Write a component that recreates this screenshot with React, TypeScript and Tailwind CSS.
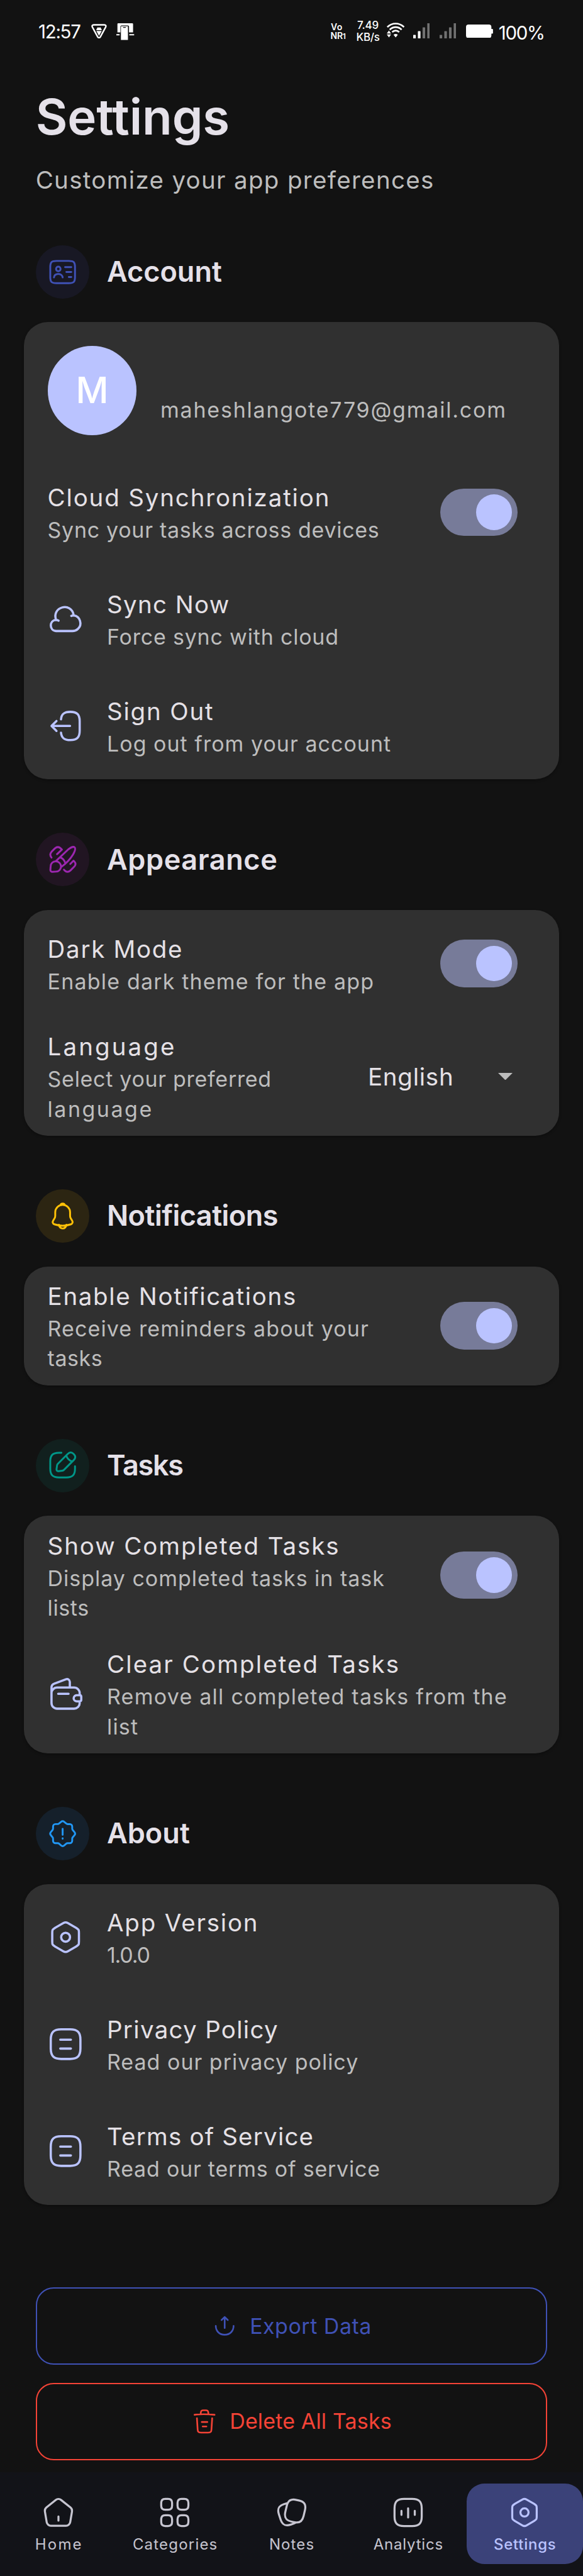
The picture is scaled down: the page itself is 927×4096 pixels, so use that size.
import type { ReactNode } from "react";

const ICONS: Record<string, string> = {
  card: "M17 21H7c-4 0-5-1-5-5V8c0-4 1-5 5-5h10c4 0 5 1 5 5v8c0 4-1 5-5 5Z M14 8h5 M15 12h4 M17 16h2 M8.5 11.29a1.81 1.81 0 1 0 0-3.62 1.81 1.81 0 0 0 0 3.62Z M12 16.33c-.14-1.46-1.3-2.6-2.76-2.74a7.6 7.6 0 0 0-1.49 0A3.08 3.08 0 0 0 5 16.33",
  brush:
    "M6.6 13.3 16.6 3.8C19 1.9 21 1.6 21.7 2.2C22.5 3 22 5.2 20.4 8C18 12 14.5 15.4 11 18 M9.7 10.3c2 .5 3.6 2 4.3 4.4 M6.4 13.5c2.4 0 4.3 1.9 4.3 4.2c0 2.3-1.7 4-4 4.1l-2.9.2c-1 .1-1.8-.6-1.7-1.7l.2-2.8c.1-2.3 1.8-4 4.1-4Z M3 10.5C1.7 8.8 1.7 7.2 3 5.8l2.8-2.8c1.5-1.3 3.2-1.3 4.6 0l1 1L7.5 7.7 M18.2 15.6l2.6-2.6l.8.8c1.1 1.3 1 2.7-.1 3.9l-3.2 3.2c-1.6 1.4-3.3 1.3-4.7 0l-.5-.6",
  bell: "M12.02 2.91c-3.31 0-6 2.69-6 6v2.89c0 .61-.26 1.54-.57 2.06L4.3 15.77c-.71 1.18-.22 2.49 1.08 2.93 4.31 1.44 8.96 1.44 13.27 0 1.21-.4 1.74-1.83 1.08-2.93l-1.15-1.91c-.3-.52-.56-1.45-.56-2.06V8.91c0-3.3-2.7-6-6-6Z M13.87 3.2c-.31-.09-.63-.16-.96-.2-.96-.12-1.88-.05-2.74.2.29-.74 1.01-1.26 1.85-1.26s1.56.52 1.85 1.26Z M15.02 19.06c0 1.65-1.35 3-3 3-.82 0-1.58-.34-2.12-.88-.54-.54-.88-1.3-.88-2.12",
  edit: "M11 2H9C4 2 2 4 2 9v6c0 5 2 7 7 7h6c5 0 7-2 7-7v-2 M16.04 3.02 8.16 10.9c-.3.3-.6.89-.66 1.32l-.43 3.01c-.16 1.09.61 1.85 1.7 1.7l3.01-.43c.42-.06 1.01-.36 1.32-.66l7.88-7.88c1.36-1.36 2-2.94 0-4.94-2-2-3.58-1.36-4.94 0Z M14.91 4.15a7.144 7.144 0 0 0 4.94 4.94",
  badge:
    "M10.75 2.45c.69-.59 1.82-.59 2.52 0l1.58 1.36c.3.26.86.47 1.26.47h1.7c1.06 0 1.93.87 1.93 1.93v1.7c0 .39.21.96.47 1.26l1.36 1.58c.59.69.59 1.82 0 2.52l-1.36 1.58c-.26.3-.47.86-.47 1.26v1.7c0 1.06-.87 1.93-1.93 1.93h-1.7c-.39 0-.96.21-1.26.47l-1.58 1.36c-.69.59-1.82.59-2.52 0l-1.58-1.36c-.3-.26-.86-.47-1.26-.47H6.18c-1.06 0-1.93-.87-1.93-1.93V16.1c0-.39-.21-.95-.46-1.25l-1.35-1.59c-.58-.69-.58-1.81 0-2.5l1.35-1.59c.25-.3.46-.86.46-1.25V6.2c0-1.06.87-1.93 1.93-1.93h1.73c.39 0 .96-.21 1.26-.47l1.58-1.35Z M12 8.13v4.83 M12 15.8v.3",
  cloud:
    "M5.54 12.62c-4.68.33-4.68 7.14 0 7.47h11.08c1.34.01 2.64-.49 3.64-1.4C23.55 15.82 21.8 10.05 17.47 9.5C15.92.12 2.38 3.69 5.59 12.62 M7.27 13.1c-.54-.27-1.13-.46-1.73-.48 M15.82 9.89c.52-.26 1.08-.39 1.66-.39",
  logout:
    "M8.9 7.56c.31-3.6 2.16-5.07 6.21-5.07h.13c4.47 0 6.26 1.79 6.26 6.26v6.52c0 4.47-1.79 6.26-6.26 6.26h-.13c-4.02 0-5.87-1.45-6.2-4.99 M15 12H3.62 M5.85 8.65 2.5 12l3.35 3.35",
  wallet:
    "M18.04 13.55c-.42.41-.66 1-.6 1.63.09 1.08 1.08 1.87 2.16 1.87h1.9v1.19c0 2.07-1.69 3.76-3.76 3.76H6.26c-2.07 0-3.76-1.69-3.76-3.76v-6.73c0-2.07 1.69-3.76 3.76-3.76h11.48c2.07 0 3.76 1.69 3.76 3.76v1.44h-2.02c-.56 0-1.07.22-1.44.6Z M2.5 12.41V7.84c0-1.19.73-2.25 1.84-2.67l7.94-3a1.9 1.9 0 0 1 2.57 1.78v3.8 M22.56 13.97v2.06c0 .55-.44 1-1 1.02H19.6c-1.08 0-2.07-.79-2.16-1.87-.06-.63.18-1.22.6-1.63.37-.38.88-.6 1.44-.6h2.08c.56.02 1 .47 1 1.02Z M7 12h7",
  setting:
    "M3 9.11v5.77C3 17 3 17 5 18.35l5.5 3.18c.83.48 2.18.48 3 0l5.5-3.18c2-1.35 2-1.35 2-3.46V9.11C21 7 21 7 19 5.65l-5.5-3.18c-.82-.48-2.17-.48-3 0L5 5.65C3 7 3 7 3 9.11Z M12 15a3 3 0 1 0 0-6 3 3 0 0 0 0 6Z",
  doc: "M9 22h6c5 0 7-2 7-7V9c0-5-2-7-7-7H9C4 2 2 4 2 9v6c0 5 2 7 7 7Z M8.4 9h7.2 M8.4 15h7.2",
  export: "M4 12c0 4.42 3 8 8 8s8-3.58 8-8 M12 14V4.2 M9.2 6.8 12 4l2.8 2.8",
  trash:
    "M21 5.98c-3.33-.33-6.68-.5-10.02-.5-1.98 0-3.96.1-5.94.3L3 5.98 M8.5 4.97l.22-1.31C8.88 2.71 9 2 10.69 2h2.62c1.69 0 1.82.75 1.97 1.67l.22 1.3 M18.85 9.14l-.65 10.07C18.09 20.78 18 22 15.21 22H8.79C6 22 5.91 20.78 5.8 19.21L5.15 9.14 M10.33 16.5h3.33 M9.5 12.5h5",
  home: "M10.07 2.82 3.14 8.37c-.78.62-1.28 1.93-1.11 2.91l1.33 7.96c.24 1.42 1.6 2.57 3.04 2.57h11.2c1.43 0 2.8-1.16 3.04-2.57l1.33-7.96c.16-.98-.34-2.29-1.11-2.91l-6.93-5.54c-1.07-.86-2.8-.86-3.86-.01Z M12 18v-3",
  category:
    "M5 10h2c2 0 3-1 3-3V5c0-2-1-3-3-3H5C3 2 2 3 2 5v2c0 2 1 3 3 3Z M17 10h2c2 0 3-1 3-3V5c0-2-1-3-3-3h-2c-2 0-3 1-3 3v2c0 2 1 3 3 3Z M17 22h2c2 0 3-1 3-3v-2c0-2-1-3-3-3h-2c-2 0-3 1-3 3v2c0 2 1 3 3 3Z M5 22h2c2 0 3-1 3-3v-2c0-2-1-3-3-3H5c-2 0-3 1-3 3v2c0 2 1 3 3 3Z",
  notes:
    "M21.66 10.44l-.98 4.18c-.84 3.61-2.5 5.07-5.62 4.77-.5-.04-1.04-.13-1.62-.27l-1.68-.4c-4.17-.99-5.46-3.05-4.48-7.23l.98-4.19c.2-.85.44-1.59.74-2.2 1.17-2.42 3.16-3.07 6.5-2.28l1.67.39c4.19.98 5.47 3.05 4.49 7.23Z M15.06 19.39c-.62.42-1.4.77-2.35 1.08l-1.58.52c-3.97 1.28-6.06.21-7.35-3.76L2.5 13.28c-1.28-3.97-.22-6.07 3.75-7.35l1.58-.52c.41-.13.8-.24 1.17-.31",
  analytics:
    "M9 22h6c5 0 7-2 7-7V9c0-5-2-7-7-7H9C4 2 2 4 2 9v6c0 5 2 7 7 7Z M7.1 10.8v3 M12 9v6.7 M16.9 10.8v3",
};

function Icon({ name, className }: { name: string; className: string }) {
  return (
    <svg
      viewBox="0 0 24 24"
      fill="none"
      stroke="currentColor"
      strokeWidth="1.5"
      strokeLinecap="round"
      strokeLinejoin="round"
      className={`shrink-0 ${className}`}
    >
      <path d={ICONS[name]} />
    </svg>
  );
}

function Signal({ lit }: { lit: number }) {
  return (
    <svg viewBox="0 0 31 28" className="h-[24px] w-[26.6px]">
      {[0, 1, 2, 3].map((i) => (
        <rect
          key={i}
          x={i * 8.7}
          y={[21.5, 14.5, 7.5, 0][i]}
          width="4.8"
          height={[6.5, 13.5, 20.5, 28][i]}
          rx="0.6"
          fill={i < lit ? "#fff" : "#717171"}
        />
      ))}
    </svg>
  );
}

function StatusBar() {
  return (
    <div className="flex h-[100px] items-start pt-[32px] text-white">
      <div className="ml-[61px] mt-[1.5px] w-[84px] text-[29.5px] leading-[32px] tracking-[-1.3px]">12:57</div>
      <svg viewBox="0 0 29 27" className="mt-[6px] h-[23.2px] w-[24.9px]">
        <path
          d="M4.6 1.7H24.4C27 1.7 28 3.8 26.8 6L17 24C15.8 26 13.2 26 12 24L2.2 6C1 3.8 2 1.7 4.6 1.7Z"
          fill="none"
          stroke="#fff"
          strokeWidth="2.8"
        />
        <path
          d="M9.5 11.6C9.5 9.5 10.6 8 11.9 7.3L11 5.7L12.6 6.6H16.4L18 5.7L17.1 7.3C18.4 8 19.5 9.5 19.5 11.6ZM9.5 13H19.5L14.5 22Z"
          fill="#fff"
        />
      </svg>
      <svg viewBox="0 0 33 31" className="ml-[15.4px] mt-[5px] h-[26.6px] w-[28.3px]">
        <path d="M2 17V1.500Q2 0 3.500 0H29.500Q31 0 31 1.500V17H23.500V6Q23.500 4 21.500 4H9.500Q7.500 4 7.500 6V17Z" fill="#fff" />
        <path d="M0 20H6V22.500H0ZM24 20H33V22.500H24Z" fill="#fff" />
        <path d="M8.500 5.500H21.500V31H8.500ZM12.500 7V8.500H17.500V7Z" fill="#fff" fillRule="evenodd" />
      </svg>
      <div className="ml-[312px] mt-[4px] w-[41px] text-[14px] font-semibold leading-[14px]">
        <div className="pl-[0.5px] tracking-[0.3px]">Vo</div>
        <div className="whitespace-nowrap tracking-[-0.3px]">
          NR<span className="text-[12px]">1</span>
        </div>
      </div>
      <div className="-mt-[1px] w-[48px] text-[17px] font-medium leading-[18.5px]">
        <div className="pl-[1.5px] tracking-[-0.14px]">7.49</div>
        <div className="tracking-[-0.36px]">KB/s</div>
      </div>
      <svg viewBox="0 0 33 28" className="mt-[4px] h-[24px] w-[28.3px]">
        <g fill="none" stroke="#fff" strokeWidth="3.2">
          <path d="M1 8.200C10-.4 23-.4 32 8.200" />
          <path d="M5.500 13C12 6.800 21 6.800 27.500 13" />
          <path d="M10 17.600C14 13.800 19 13.800 23 17.600" />
        </g>
        <path d="M4 14.500L8 20H0ZM0 22H8L4 27.500ZM16.500 27.500L12.500 22.500Q16.500 19.500 20.500 22.500Z" fill="#fff" />
      </svg>
      <div className="ml-[14px] mt-[5px] flex gap-[15.4px]">
        <Signal lit={2} />
        <Signal lit={0} />
      </div>
      <svg viewBox="0 0 50 25" className="ml-[15.4px] mt-[6.5px] h-[21.5px] w-[42.9px]">
        <rect width="47" height="25" rx="4.5" fill="#fff" />
        <rect x="45" y="8" width="5" height="9" rx="1.5" fill="#fff" />
      </svg>
      <div className="ml-[9px] mt-[4px] text-[29.5px] leading-[32px] tracking-[-1.3px]">100%</div>
    </div>
  );
}

function SectionHeader({
  icon,
  title,
  circle,
  color,
  tracking,
}: {
  icon: string;
  title: string;
  circle: string;
  color: string;
  tracking: string;
}) {
  return (
    <div className="flex h-[85px] items-center pl-[56.65px]">
      <div className={`flex size-[85px] shrink-0 items-center justify-center rounded-full ${circle}`}>
        <Icon name={icon} className={`size-[47.2px] ${color}`} />
      </div>
      <h2 className={`ml-[28.3px] text-[45px] font-semibold leading-[56px] text-[#e5e1e9] ${tracking}`}>{title}</h2>
    </div>
  );
}

function Card({ children }: { children: ReactNode }) {
  return (
    <div className="mx-[37.8px] mb-[85px] mt-[37.8px] rounded-[37.8px] bg-[#303030] pl-[37.8px] shadow-[0_2px_4px_rgba(0,0,0,0.3)]">
      {children}
    </div>
  );
}

type Line = [text: string, tracking: string];

function RowText({ title, lines }: { title: Line; lines: Line[] }) {
  return (
    <div className="flex flex-col whitespace-nowrap">
      <div className={`text-[38.5px] leading-[56px] text-[#e5e1e6] ${title[1]}`}>{title[0]}</div>
      {lines.map(([text, tracking]) => (
        <div key={text} className={`text-[34px] leading-[47.2px] text-[#bdbdbd] ${tracking}`}>
          {text}
        </div>
      ))}
    </div>
  );
}

function Row({
  title,
  lines,
  icon,
  right,
}: {
  title: Line;
  lines: Line[];
  icon?: string;
  right?: ReactNode;
}) {
  return (
    <div className={`flex items-center ${lines.length > 1 ? "h-[188.8px]" : "h-[169.94px]"}`}>
      {icon && <Icon name={icon} className="mr-[37.8px] size-[56.6px] text-[#bac3ff]" />}
      <RowText title={title} lines={lines} />
      {right && <div className="ml-auto">{right}</div>}
    </div>
  );
}

function Switch() {
  return (
    <div className="mr-[66.1px] flex h-[75.5px] w-[122.7px] items-center justify-end rounded-full bg-[#777b99] pr-[9.4px]">
      <div className="size-[56.6px] rounded-full bg-[#bac3ff]" />
    </div>
  );
}

function ActionButton({
  icon,
  label,
  tone,
  tracking,
}: {
  icon: string;
  label: string;
  tone: string;
  tracking: string;
}) {
  return (
    <button
      className={`mx-[56.65px] flex h-[123px] items-center justify-center rounded-[28.3px] border-[2.4px] ${tone}`}
    >
      <Icon name={icon} className="mr-[18.5px] size-[42.5px]" />
      <span className={`text-[34px] leading-[48px] ${tracking}`}>{label}</span>
    </button>
  );
}

const TABS = [
  { icon: "home", label: "Home", tone: "text-[#c6c5d0]", tracking: "tracking-[2.2px] -mr-[2.2px]" },
  { icon: "category", label: "Categories", tone: "text-[#c6c5d0]", tracking: "tracking-[1.2px] -mr-[1.2px]" },
  { icon: "notes", label: "Notes", tone: "text-[#c6c5d0]", tracking: "tracking-[1.1px] -mr-[1.1px]" },
  { icon: "analytics", label: "Analytics", tone: "text-[#c6c5d0]", tracking: "tracking-[0.8px] -mr-[0.8px]" },
  {
    icon: "setting",
    label: "Settings",
    tone: "rounded-[28.3px] bg-[#3b4279] font-medium text-[#bac3ff]",
    tracking: "tracking-[0.75px] -mr-[0.75px]",
  },
];

export default function App() {
  return (
    <div className="flex h-[4096px] w-[927px] flex-col overflow-hidden bg-[#121212] font-['Inter',sans-serif]">
      <StatusBar />
      <header className="h-[289.6px] whitespace-nowrap pl-[56.65px] pt-[40.5px]">
        <h1 className="text-[78px] font-semibold leading-[90px] tracking-[-0.1px] text-[#e5e1e9]">Settings</h1>
        <p className="mt-[27px] text-[38.5px] leading-[56px] tracking-[1.32px] text-[#bdbdbd]">
          Customize your app preferences
        </p>
      </header>

      <SectionHeader icon="card" title="Account" circle="bg-[#181824]" color="text-[#3f51b5]" tracking="tracking-[0px]" />
      <Card>
        <div className="flex h-[217.2px] pt-[37.8px]">
          <div className="flex size-[141.6px] items-center justify-center rounded-full bg-[#bac3ff] text-[57px] font-medium text-white">
            M
          </div>
          <div className="ml-[37.8px] mt-[78px] text-[34px] leading-[47.2px] tracking-[1.78px] text-[#bdbdbd]">
            maheshlangote779@gmail.com
          </div>
        </div>
        <Row
          title={["Cloud Synchronization", "tracking-[1.83px]"]}
          lines={[["Sync your tasks across devices", "tracking-[0.7px]"]]}
          right={<Switch />}
        />
        <Row
          icon="cloud"
          title={["Sync Now", "tracking-[1.35px]"]}
          lines={[["Force sync with cloud", "tracking-[0.8px]"]]}
        />
        <Row
          icon="logout"
          title={["Sign Out", "tracking-[1.8px]"]}
          lines={[["Log out from your account", "tracking-[1.02px]"]]}
        />
      </Card>

      <SectionHeader icon="brush" title="Appearance" circle="bg-[#211522]" color="text-[#9c27b0]" tracking="tracking-[0.6px]" />
      <Card>
        <Row
          title={["Dark Mode", "tracking-[1.7px]"]}
          lines={[["Enable dark theme for the app", "tracking-[1.18px]"]]}
          right={<Switch />}
        />
        <Row
          title={["Language", "tracking-[3.1px]"]}
          lines={[
            ["Select your preferred", "tracking-[0.7px]"],
            ["language", "tracking-[2.5px]"],
          ]}
          right={
            <div className="mr-[73.8px] flex items-center">
              <span className="mr-[71px] text-[38.5px] leading-[56px] tracking-[0.75px] text-[#e5e1e6]">English</span>
              <svg viewBox="0 0 10 5" className="h-[11.5px] w-[23px]">
                <path d="M0 0H10L5 5Z" fill="#bdbdbd" />
              </svg>
            </div>
          }
        />
      </Card>

      <SectionHeader icon="bell" title="Notifications" circle="bg-[#2c2512]" color="text-[#ffc107]" tracking="tracking-[-0.5px]" />
      <Card>
        <Row
          title={["Enable Notifications", "tracking-[1.65px]"]}
          lines={[
            ["Receive reminders about your", "tracking-[1.1px]"],
            ["tasks", "tracking-[0.55px]"],
          ]}
          right={<Switch />}
        />
      </Card>

      <SectionHeader icon="edit" title="Tasks" circle="bg-[#11201e]" color="text-[#009688]" tracking="tracking-[-1.3px]" />
      <Card>
        <Row
          title={["Show Completed Tasks", "tracking-[1.9px]"]}
          lines={[
            ["Display completed tasks in task", "tracking-[0.98px]"],
            ["lists", "tracking-[0.6px]"],
          ]}
          right={<Switch />}
        />
        <Row
          icon="wallet"
          title={["Clear Completed Tasks", "tracking-[2.1px]"]}
          lines={[
            ["Remove all completed tasks from the", "tracking-[1.25px]"],
            ["list", "tracking-[1.2px]"],
          ]}
        />
      </Card>

      <SectionHeader icon="badge" title="About" circle="bg-[#15202b]" color="text-[#2196f3]" tracking="tracking-[0.05px]" />
      <Card>
        <Row icon="setting" title={["App Version", "tracking-[1.8px]"]} lines={[["1.0.0", "tracking-[-1.2px]"]]} />
        <Row
          icon="doc"
          title={["Privacy Policy", "tracking-[1.3px]"]}
          lines={[["Read our privacy policy", "tracking-[1px]"]]}
        />
        <Row
          icon="doc"
          title={["Terms of Service", "tracking-[1.2px]"]}
          lines={[["Read our terms of service", "tracking-[0.78px]"]]}
        />
      </Card>

      <div className="mt-[46.7px] flex flex-col gap-[28.4px]">
        <ActionButton icon="export" label="Export Data" tone="border-[#3f51b5] text-[#3f51b5]" tracking="tracking-[0.5px]" />
        <ActionButton icon="trash" label="Delete All Tasks" tone="border-[#f44336] text-[#f44336]" tracking="tracking-[0.15px]" />
      </div>

      <nav className="mt-auto grid h-[165.5px] grid-cols-5 bg-[#121318] pb-[19px] pt-[18.9px]">
        {TABS.map(({ icon, label, tone, tracking }) => (
          <div key={label} className={`flex flex-col items-center pt-[20px] ${tone}`}>
            <Icon name={icon} className="size-[51.9px]" />
            <span className={`mt-[8.5px] text-[24px] leading-[32px] ${tracking}`}>{label}</span>
          </div>
        ))}
      </nav>
    </div>
  );
}
